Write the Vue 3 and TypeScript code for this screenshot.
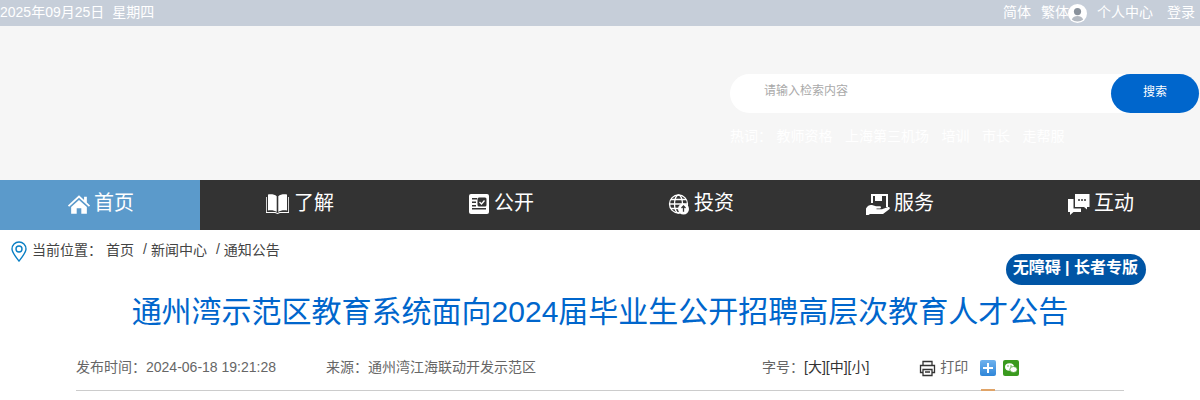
<script setup lang="ts">
const hotWords = ["教师资格", "上海第三机场", "培训", "市长", "走帮服"];
const navItems = [
  { label: "首页", icon: "home" },
  { label: "了解", icon: "book" },
  { label: "公开", icon: "open" },
  { label: "投资", icon: "globe" },
  { label: "服务", icon: "service" },
  { label: "互动", icon: "chat" },
];
</script>

<template>
  <div class="page">
    <div class="topbar">
      <div class="date"><span>2025年09月25日</span><span>星期四</span></div>
      <div class="top-links">
        <span>简体</span>
        <span class="fan">繁体</span>
        <svg class="avatar" width="19" height="19" viewBox="0 0 20 20">
          <circle cx="10" cy="10" r="10" fill="#fff" />
          <circle cx="10" cy="8" r="3.800" fill="#8a929c" />
          <path d="M4 16.200C5.200 13.400 7.500 12.600 10 12.600s4.800.8 6 3.600C14.500 17.600 12.400 18.300 10 18.300s-4.500-.7-6-2.100Z" fill="#b4bac2" />
        </svg>
        <span class="center">个人中心</span>
        <span class="login">登录</span>
      </div>
    </div>

    <header class="header">
      <div class="search-area">
        <div class="search">
          <span class="placeholder">请输入检索内容</span>
          <span class="search-btn">搜索</span>
        </div>
        <div class="hot">
          <span class="hot-label">热词：</span>
          <span v-for="w in hotWords" :key="w">{{ w }}</span>
        </div>
      </div>
    </header>

    <nav class="nav">
      <div v-for="(item, i) in navItems" :key="item.label" class="nav-item" :class="{ active: i === 0 }">
        <span class="nav-icon">
          <svg v-if="item.icon === 'home'" width="24" height="21" viewBox="0 0 26 22" fill="#fff">
            <path d="M13 1 1 12l1.300 1.400L13 3.800l10.700 9.600L25 12l-3.500-3.200V2.600h-3v3.500Z" />
            <path d="M13 6 4.500 13.600V21h6v-6h5v6h6v-7.400Z" />
          </svg>
          <svg v-else-if="item.icon === 'book'" class="left2" width="25" height="22" viewBox="0 0 25 22" fill="#fff">
            <path d="M3 1.500c3.500-.5 6.800 0 8.700 1.700V19c-2-1.500-5.200-2-8.700-1.500Z" />
            <path d="M22 1.500c-3.500-.5-6.800 0-8.700 1.700V19c2-1.500 5.200-2 8.700-1.500Z" />
            <path d="M1 4v16h9l2.500 1 2.500-1h9V4h-.8v15h-8.600l-2.100.9-2.100-.9H1.800V4Z" />
          </svg>
          <svg v-else-if="item.icon === 'open'" width="20" height="20" viewBox="0 0 20 20">
            <rect width="20" height="20" rx="2" fill="#fff" />
            <path d="M3 4h5v1.500H3ZM3 7.500h4V9H3ZM3 11h4v1.500H3ZM3 14h14v1.500H3Z" fill="#333" />
            <rect x="8.500" y="3.500" width="9" height="9" rx="1.500" fill="#333" />
            <path d="m10.500 8 2 2 3-3.500" fill="none" stroke="#fff" stroke-width="1.300" />
          </svg>
          <svg v-else-if="item.icon === 'globe'" width="22" height="21" viewBox="0 0 21 21" fill="none" stroke="#fff" stroke-width="1.300">
            <circle cx="10" cy="10" r="9" />
            <ellipse cx="10" cy="10" rx="4" ry="9" />
            <path d="M1 10h18M2.500 5.500h15M2.500 14.500h15" />
            <circle cx="15" cy="15" r="5.500" fill="#fff" stroke="none" />
            <path d="M15 12.200v5.600M13 14l2-2 2 2" stroke="#333" stroke-width="1.300" />
          </svg>
          <svg v-else-if="item.icon === 'service'" class="left1" width="26" height="22" viewBox="0 0 26 22" fill="#fff">
            <path d="M6 1h17v13h-2V3h-4v5h-7V3H8v7H6Z" />
            <path d="M1 15.500c1.500-3 4-4 6-3.500l4 1.200h4c1.200 0 1.500 2 0 2.300h-3.500v.8H17l6-2.300c1.700-.4 2.500 1.100 1.300 2.200L18 21H5l-1.500 1H1Z" />
          </svg>
          <svg v-else class="left1" width="23" height="23" viewBox="0 0 23 23" fill="#fff">
            <path d="M8 1h14.500v13H20v2.500L17 14H8Z" />
            <path d="M6.500 6H1v13h2v3l3.500-3H14v-3.500H6.500Z" />
            <circle cx="12" cy="7" r="1" fill="#333" />
            <circle cx="15" cy="7" r="1" fill="#333" />
            <circle cx="18" cy="7" r="1" fill="#333" />
          </svg>
        </span>
        <span>{{ item.label }}</span>
      </div>
    </nav>

    <div class="crumbs">
      <svg width="16" height="21" viewBox="0 0 16 21" fill="none" stroke="#0a7fc4" stroke-width="1.400">
        <path d="M8 20C4 15 1 11.500 1 8a7 7 0 0 1 14 0c0 3.500-3 7-7 12Z" />
        <circle cx="8" cy="8" r="3" />
      </svg>
      <span class="crumb-label">当前位置：</span>
      <span class="crumb-home">首页</span>
      <span class="crumb-sep">/</span><span>新闻中心</span>
      <span class="crumb-sep second">/</span><span>通知公告</span>
    </div>

    <div class="access-row"><span class="access">无障碍 | 长者专版</span></div>

    <h1 class="title">通州湾示范区教育系统面向2024届毕业生公开招聘高层次教育人才公告</h1>

    <div class="meta">
      <span class="pub">发布时间：2024-06-18 19:21:28</span>
      <span class="source">来源：通州湾江海联动开发示范区</span>
      <span class="size">字号：<b>[大][中][小]</b></span>
      <svg class="printer" width="17" height="17" viewBox="0 0 17 17" fill="none" stroke="#333" stroke-width="1.300">
        <path d="M4 5V1.500h9V5M4 12.500H1.500V5.500h14v7H13" />
        <path d="M4 9.500h9v6H4ZM6 12h5" />
      </svg>
      <span class="print">打印</span>
      <span class="plus"><i></i></span>
      <svg class="share-wx" width="16" height="16" viewBox="0 0 16 16">
        <rect width="16" height="16" rx="2" fill="#3a9a1e" />
        <ellipse cx="6.500" cy="7" rx="4.500" ry="3.700" fill="#fff" />
        <ellipse cx="10.500" cy="9.500" rx="3.700" ry="3" fill="#fff" stroke="#3a9a1e" stroke-width=".7" />
        <circle cx="5" cy="6" r=".7" fill="#3a9a1e" />
        <circle cx="8" cy="6" r=".7" fill="#3a9a1e" />
      </svg>
    </div>
    <div class="rule"><span class="mark"></span></div>
  </div>
</template>

<style>
html, body { margin: 0; background: #fff; overflow: hidden; }
</style>

<style scoped>
.page {
  width: 1200px;
  height: 400px;
  overflow: hidden;
  font-family: "Liberation Sans", "Noto Sans CJK SC", sans-serif;
}
.topbar {
  height: 26px;
  background: #c6ced9;
  color: #fff;
  font-size: 14px;
  display: flex;
  justify-content: space-between;
  align-items: center;
  padding-bottom: 5px;
  box-sizing: border-box;
}
.date { display: flex; gap: 8px; }
.top-links { display: flex; align-items: center; padding-right: 5px; }
.fan { margin-left: 10px; }
.avatar { margin: 6px 0 0 -1px; }
.center { margin-left: 10px; }
.login { margin-left: 14px; }
.header {
  height: 154px;
  background: #f6f6f6;
  display: flex;
  justify-content: flex-end;
}
.search-area { width: 470px; padding-top: 48px; }
.search {
  height: 39px;
  width: 469px;
  background: #fff;
  border-radius: 20px;
  display: flex;
  justify-content: space-between;
  color: #a9a9a9;
  font-size: 12px;
}
.placeholder { padding: 7px 0 0 34px; }
.search-btn {
  width: 88px;
  height: 39px;
  border-radius: 20px;
  background: #0066cc;
  color: #fff;
  text-align: center;
  line-height: 36px;
}
.hot {
  display: flex;
  gap: 12.500px;
  margin-top: 12px;
  font-size: 14px;
  color: #fff;
  white-space: nowrap;
}
.hot-label { width: 34px; }
.nav {
  height: 50px;
  background: #333;
  display: grid;
  grid-template-columns: repeat(6, 200px);
}
.nav-item {
  display: flex;
  align-items: center;
  padding: 0 0 7px 64px;
  color: #fff;
  font-size: 20px;
  box-sizing: border-box;
}
.nav-item.active { background: #5b9acb; }
.nav-icon {
  width: 30px;
  height: 24px;
  margin-top: 5px;
  display: flex;
  align-items: center;
  justify-content: center;
}
.left1 { margin-right: 2px; }
.left2 { margin-right: 4px; }
.crumbs {
  display: flex;
  align-items: center;
  height: 40px;
  padding: 0 0 2px 11px;
  box-sizing: border-box;
  font-size: 14px;
  color: #444;
}
.crumbs svg { margin-top: 4px; }
.crumb-label { margin-left: 5px; }
.crumb-home { margin-left: 4px; }
.crumb-sep { margin: 0 4px 0 9px; }
.crumb-sep.second { margin-left: 9px; }
.access-row {
  display: flex;
  justify-content: flex-end;
  padding-right: 54px;
  margin-top: -16px;
}
.access {
  height: 31px;
  line-height: 27px;
  padding: 0 8px 0 7px;
  box-sizing: border-box;
  border-radius: 16px;
  background: #0055a5;
  color: #fff;
  font-size: 16px;
  font-weight: 700;
  white-space: nowrap;
}
.title {
  margin: 7px 0 0;
  font-size: 30px;
  line-height: 40px;
  font-weight: 400;
  color: #0066cc;
  text-align: center;
}
.meta {
  display: flex;
  align-items: center;
  height: 34px;
  margin-top: 17px;
  padding-left: 76px;
  font-size: 14px;
  color: #666;
}
.source { margin-left: 50px; }
.size { margin-left: 226px; }
.size b { font-weight: 400; color: #333; }
.printer { margin: 5px 0 0 50px; }
.print { margin: -1px 0 0 4px; }
.plus {
  width: 16px;
  height: 16px;
  margin: 4px 0 0 12px;
  border-radius: 2px;
  background: linear-gradient(#6fb2ee, #2f86d8);
  position: relative;
}
.plus i {
  position: absolute;
  left: 3px;
  top: 7px;
  width: 10px;
  height: 2px;
  background: #fff;
}
.plus i::after {
  content: "";
  position: absolute;
  left: 4px;
  top: -4px;
  width: 2px;
  height: 10px;
  background: #fff;
}
.share-wx { margin: 4px 0 0 7px; }
.rule {
  position: relative;
  margin: 7px 76px 0;
  border-top: 1px solid #ccc;
}
.mark {
  position: absolute;
  left: 905px;
  top: -2px;
  width: 14px;
  height: 2px;
  background: #e0a468;
}
</style>
